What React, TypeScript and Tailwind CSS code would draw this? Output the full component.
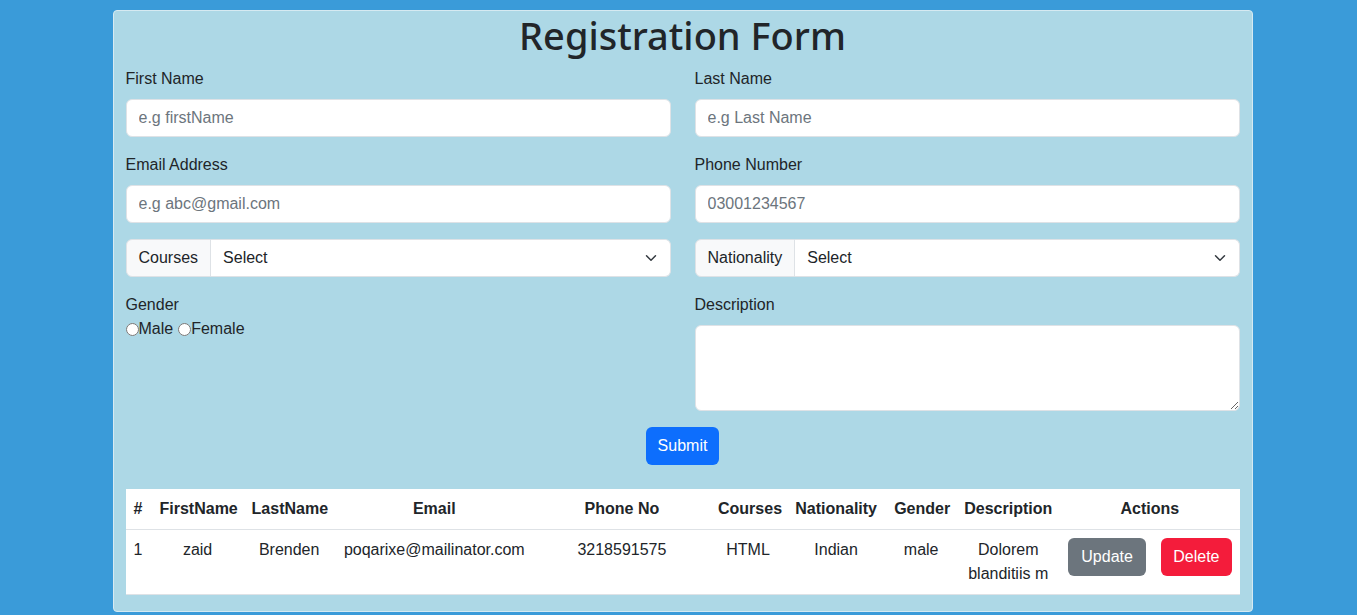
import React from 'react'

const font = { fontFamily: '"Liberation Sans", Arial, sans-serif' }

function Chevron() {
  return (
    <svg viewBox="0 0 16 16" className="absolute right-3 top-1/2 h-3 w-4 -translate-y-1/2 pointer-events-none" fill="none">
      <path d="m2 5 6 6 6-6" stroke="#343a40" strokeWidth="2" strokeLinecap="round" strokeLinejoin="round" />
    </svg>
  )
}

function Field({ label, placeholder }: { label: string; placeholder: string }) {
  return (
    <div className="mb-4">
      <label className="block mb-2 leading-6">{label}</label>
      <input
        placeholder={placeholder}
        className="block w-full h-[38px] px-3 rounded-[6px] border border-[#dee2e6] bg-white text-base text-[#212529] placeholder:text-[#6c757d] outline-none"
      />
    </div>
  )
}

function SelectGroup({ label }: { label: string }) {
  return (
    <div className="mb-4 flex h-[38px]">
      <span className="flex items-center px-3 bg-[#f8f9fa] border border-[#dee2e6] rounded-l-[6px] text-[#212529]">{label}</span>
      <div className="relative flex-1">
        <select className="appearance-none w-full h-full pl-3 pr-9 bg-white border border-l-0 border-[#dee2e6] rounded-r-[6px] text-[#212529] outline-none">
          <option>Select</option>
        </select>
        <Chevron />
      </div>
    </div>
  )
}

const cols = [
  { h: '#', w: 'w-[26px]', a: 'text-left' },
  { h: 'FirstName', w: 'w-[92px]', a: 'text-center' },
  { h: 'LastName', w: 'w-[91px]', a: 'text-center' },
  { h: 'Email', w: 'w-[199px]', a: 'text-center' },
  { h: 'Phone No', w: 'w-[176px]', a: 'text-center' },
  { h: 'Courses', w: 'w-[76px]', a: 'text-center' },
  { h: 'Nationality', w: 'w-[100px]', a: 'text-center' },
  { h: 'Gender', w: 'w-[70px]', a: 'text-center' },
  { h: 'Description', w: 'w-[104px]', a: 'text-center' },
  { h: 'Actions', w: 'w-[179px]', a: 'text-center' },
]

const row = ['1', 'zaid', 'Brenden', 'poqarixe@mailinator.com', '3218591575', 'HTML', 'Indian', 'male', 'Dolorem blanditiis m']

export default function App() {
  return (
    <div className="min-h-screen bg-[#3a9bd9] pt-[10px] pl-2 text-[#212529] text-base" style={font}>
      <div className="mx-auto w-[1140px] bg-[#add8e6] border border-[#d6eaf2] rounded-[4px] px-3 pb-4">
        <h1
          className="text-center text-[38px] font-medium leading-[48px] mb-2"
          style={{ fontFamily: '"Noto Sans", "Liberation Sans", sans-serif' }}
        >
          Registration Form
        </h1>

        <div className="grid grid-cols-2 gap-x-6">
          <Field label="First Name" placeholder="e.g firstName" />
          <Field label="Last Name" placeholder="e.g Last Name" />
          <Field label="Email Address" placeholder="e.g abc@gmail.com" />
          <Field label="Phone Number" placeholder="03001234567" />
          <SelectGroup label="Courses" />
          <SelectGroup label="Nationality" />

          <div>
            <label className="block leading-6">Gender</label>
            <div className="flex items-center leading-6">
              <input type="radio" name="g" className="m-0 w-[13px] h-[13px]" />
              <span>Male</span>
              <input type="radio" name="g" className="m-0 ml-[5px] w-[13px] h-[13px]" />
              <span>Female</span>
            </div>
          </div>
          <div className="mb-4">
            <label className="block mb-2 leading-6">Description</label>
            <textarea rows={3} className="block w-full h-[86px] px-3 py-1.5 rounded-[6px] border border-[#dee2e6] bg-white outline-none" />
          </div>
        </div>

        <div className="flex justify-center mb-6">
          <button className="h-[38px] px-3 rounded-[6px] bg-[#0d6efd] text-white">Submit</button>
        </div>

        <table className="w-full table-fixed border-collapse bg-white">
          <thead>
            <tr className="border-b border-[#dee2e6]">
              {cols.map((c) => (
                <th key={c.h} className={`${c.w} ${c.a} p-2 font-bold leading-6`}>{c.h}</th>
              ))}
            </tr>
          </thead>
          <tbody>
            <tr className="border-b border-[#dee2e6]">
              {row.map((v, i) => (
                <td key={i} className={`${cols[i].a} p-2 align-top leading-6`}>{v}</td>
              ))}
              <td className="p-2 align-top">
                <div className="flex justify-between">
                  <button className="h-[38px] px-[13px] rounded-[6px] bg-[#6c757d] text-white">Update</button>
                  <button className="h-[38px] px-3 rounded-[6px] bg-[#f41c3b] text-white">Delete</button>
                </div>
              </td>
            </tr>
          </tbody>
        </table>
      </div>
    </div>
  )
}
